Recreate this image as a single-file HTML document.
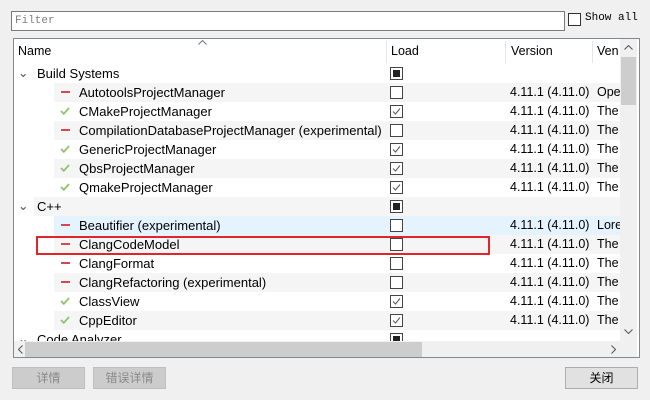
<!DOCTYPE html><html><head><style>
body{margin:0;width:650px;height:400px;background:#f0f0f0;font-family:"Liberation Sans","Noto Sans CJK SC",sans-serif;font-size:12.5px;color:#000;position:relative;overflow:hidden}
.a{position:absolute}
.filter{left:11px;top:11px;width:549px;height:18px;border:1px solid #7a7a7a;background:#fff;font-family:"Liberation Mono",monospace;font-size:11px;color:#808080;line-height:18px;padding-left:3px;box-sizing:content-box}
.tbl{left:13px;top:38px;width:625px;height:318px;border:1px solid #828790;background:#fff;overflow:hidden}
.row{position:absolute;left:0;width:606px;height:19px;line-height:19px}
.sh{background:#f5f5f5}
.cb{position:absolute;left:376px;top:3px;width:11px;height:11px;border:1px solid #444;background:#fff}
.cb.p::after{content:"";position:absolute;left:2px;top:2px;width:7px;height:7px;background:#222}
.cb svg{position:absolute;left:1px;top:1px}
.ver{position:absolute;left:496px}
.ven{position:absolute;left:583px}
.minus{position:absolute;left:47px;top:8px;width:9px;height:2px;background:#d9464e}
.chk{position:absolute;left:46px;top:5px}
.nm{position:absolute;left:65px;font-size:13px}
.btn{position:absolute;top:367px;height:20px;border:1px solid #adadad;background:#e1e1e1;text-align:center;line-height:20px;font-size:12px}
</style></head><body>
<div class="a filter">Filter</div>
<div class="a" style="left:568px;top:13px;width:11px;height:11px;border:1px solid #333;background:#fff"></div>
<div class="a" style="left:585px;top:12px;font-family:'Liberation Mono',monospace;font-size:11px">Show all</div>
<div class="a tbl">
 <div class="a" style="left:4px;top:5px">Name</div>
 <svg class="a" style="left:184px;top:1px" width="9" height="5"><path d="M0.5 4.5L4.5 0.5L8.5 4.5" fill="none" stroke="#777"/></svg>
 <div class="a" style="left:372px;top:2px;width:1px;height:22px;background:#e5e5e5"></div>
 <div class="a" style="left:377px;top:5px">Load</div>
 <div class="a" style="left:491px;top:2px;width:1px;height:22px;background:#e5e5e5"></div>
 <div class="a" style="left:497px;top:5px">Version</div>
 <div class="a" style="left:578px;top:2px;width:1px;height:22px;background:#e5e5e5"></div>
 <div class="a" style="left:583px;top:5px">Ven</div>
 <svg width="0" height="0" style="position:absolute"><defs>
  <symbol id="g" viewBox="0 0 10 8"><path d="M1 4L3.8 6.8L9 1" fill="none" stroke="#8cc46c" stroke-width="1.8"/></symbol>
  <symbol id="k" viewBox="0 0 9 9"><path d="M1 4.5L3.5 7L8 1.5" fill="none" stroke="#555" stroke-width="1"/></symbol>
 </defs></svg>
 <div class="row" style="top:25px"><span class="a" style="left:4px;color:#555">⌄</span><span class="a" style="left:23px;font-size:13px">Build Systems</span><div class="cb p"></div></div>
 <div class="row" style="top:44px"><div class="a sh" style="left:40px;width:566px;height:19px"></div><div class="minus"></div><span class="nm">AutotoolsProjectManager</span><div class="cb"></div><span class="ver">4.11.1 (4.11.0)</span><span class="ven">Ope</span></div>
 <div class="row" style="top:63px"><svg class="chk" width="10" height="8"><use href="#g"/></svg><span class="nm">CMakeProjectManager</span><div class="cb"><svg width="9" height="9"><use href="#k"/></svg></div><span class="ver">4.11.1 (4.11.0)</span><span class="ven">The</span></div>
 <div class="row" style="top:82px"><div class="a sh" style="left:40px;width:566px;height:19px"></div><div class="minus"></div><span class="nm">CompilationDatabaseProjectManager (experimental)</span><div class="cb"></div><span class="ver">4.11.1 (4.11.0)</span><span class="ven">The</span></div>
 <div class="row" style="top:101px"><svg class="chk" width="10" height="8"><use href="#g"/></svg><span class="nm">GenericProjectManager</span><div class="cb"><svg width="9" height="9"><use href="#k"/></svg></div><span class="ver">4.11.1 (4.11.0)</span><span class="ven">The</span></div>
 <div class="row" style="top:120px"><div class="a sh" style="left:40px;width:566px;height:19px"></div><svg class="chk" width="10" height="8"><use href="#g"/></svg><span class="nm">QbsProjectManager</span><div class="cb"><svg width="9" height="9"><use href="#k"/></svg></div><span class="ver">4.11.1 (4.11.0)</span><span class="ven">The</span></div>
 <div class="row" style="top:139px"><svg class="chk" width="10" height="8"><use href="#g"/></svg><span class="nm">QmakeProjectManager</span><div class="cb"><svg width="9" height="9"><use href="#k"/></svg></div><span class="ver">4.11.1 (4.11.0)</span><span class="ven">The</span></div>
 <div class="row" style="top:158px"><div class="a sh" style="left:20px;width:586px;height:19px"></div><span class="a" style="left:4px;color:#555">⌄</span><span class="a" style="left:23px;font-size:13px">C++</span><div class="cb p"></div></div>
 <div class="row" style="top:177px"><div class="a" style="left:40px;width:566px;height:19px;background:#e5f3ff"></div><div class="minus"></div><span class="nm">Beautifier (experimental)</span><div class="cb"></div><span class="ver">4.11.1 (4.11.0)</span><span class="ven">Lore</span></div>
 <div class="row" style="top:196px"><div class="a sh" style="left:40px;width:566px;height:19px"></div><div class="minus"></div><span class="nm">ClangCodeModel</span><div class="cb"></div><span class="ver">4.11.1 (4.11.0)</span><span class="ven">The</span></div>
 <div class="row" style="top:215px"><div class="minus"></div><span class="nm">ClangFormat</span><div class="cb"></div><span class="ver">4.11.1 (4.11.0)</span><span class="ven">The</span></div>
 <div class="row" style="top:234px"><div class="a sh" style="left:40px;width:566px;height:19px"></div><div class="minus"></div><span class="nm">ClangRefactoring (experimental)</span><div class="cb"></div><span class="ver">4.11.1 (4.11.0)</span><span class="ven">The</span></div>
 <div class="row" style="top:253px"><svg class="chk" width="10" height="8"><use href="#g"/></svg><span class="nm">ClassView</span><div class="cb"><svg width="9" height="9"><use href="#k"/></svg></div><span class="ver">4.11.1 (4.11.0)</span><span class="ven">The</span></div>
 <div class="row" style="top:272px"><div class="a sh" style="left:40px;width:566px;height:19px"></div><svg class="chk" width="10" height="8"><use href="#g"/></svg><span class="nm">CppEditor</span><div class="cb"><svg width="9" height="9"><use href="#k"/></svg></div><span class="ver">4.11.1 (4.11.0)</span><span class="ven">The</span></div>
 <div class="row" style="top:291px"><span class="a" style="left:4px;color:#555">⌄</span><span class="a" style="left:23px;font-size:13px">Code Analyzer</span><div class="cb p"></div></div>
 <div class="a" style="left:22px;top:197px;width:450px;height:15px;border:2px solid #e0262b"></div>
 <div class="a" style="left:606px;top:0;width:17px;height:302px;background:#f0f0f0"></div>
 <svg class="a" style="left:610px;top:6px" width="9" height="5"><path d="M0.5 4.5L4.5 0.5L8.5 4.5" fill="none" stroke="#555"/></svg>
 <div class="a" style="left:607px;top:18px;width:15px;height:48px;background:#cdcdcd"></div>
 <svg class="a" style="left:610px;top:290px" width="9" height="5"><path d="M0.5 0.5L4.5 4.5L8.5 0.5" fill="none" stroke="#555"/></svg>
 <div class="a" style="left:0;top:302px;width:606px;height:17px;background:#f0f0f0"></div>
 <svg class="a" style="left:4px;top:306px" width="5" height="9"><path d="M4.5 0.5L0.5 4.5L4.5 8.5" fill="none" stroke="#555"/></svg>
 <div class="a" style="left:11px;top:303px;width:397px;height:15px;background:#cdcdcd"></div>
 <svg class="a" style="left:597px;top:306px" width="5" height="9"><path d="M0.5 0.5L4.5 4.5L0.5 8.5" fill="none" stroke="#555"/></svg>
 <div class="a" style="left:606px;top:302px;width:17px;height:17px;background:#f0f0f0"></div>
</div>
<div class="btn" style="left:12px;width:71px;color:#8a8a8a;background:#cccccc;border-color:#bfbfbf">详情</div>
<div class="btn" style="left:93px;width:71px;color:#8a8a8a;background:#cccccc;border-color:#bfbfbf">错误详情</div>
<div class="btn" style="left:565px;width:71px">关闭</div>
</body></html>
